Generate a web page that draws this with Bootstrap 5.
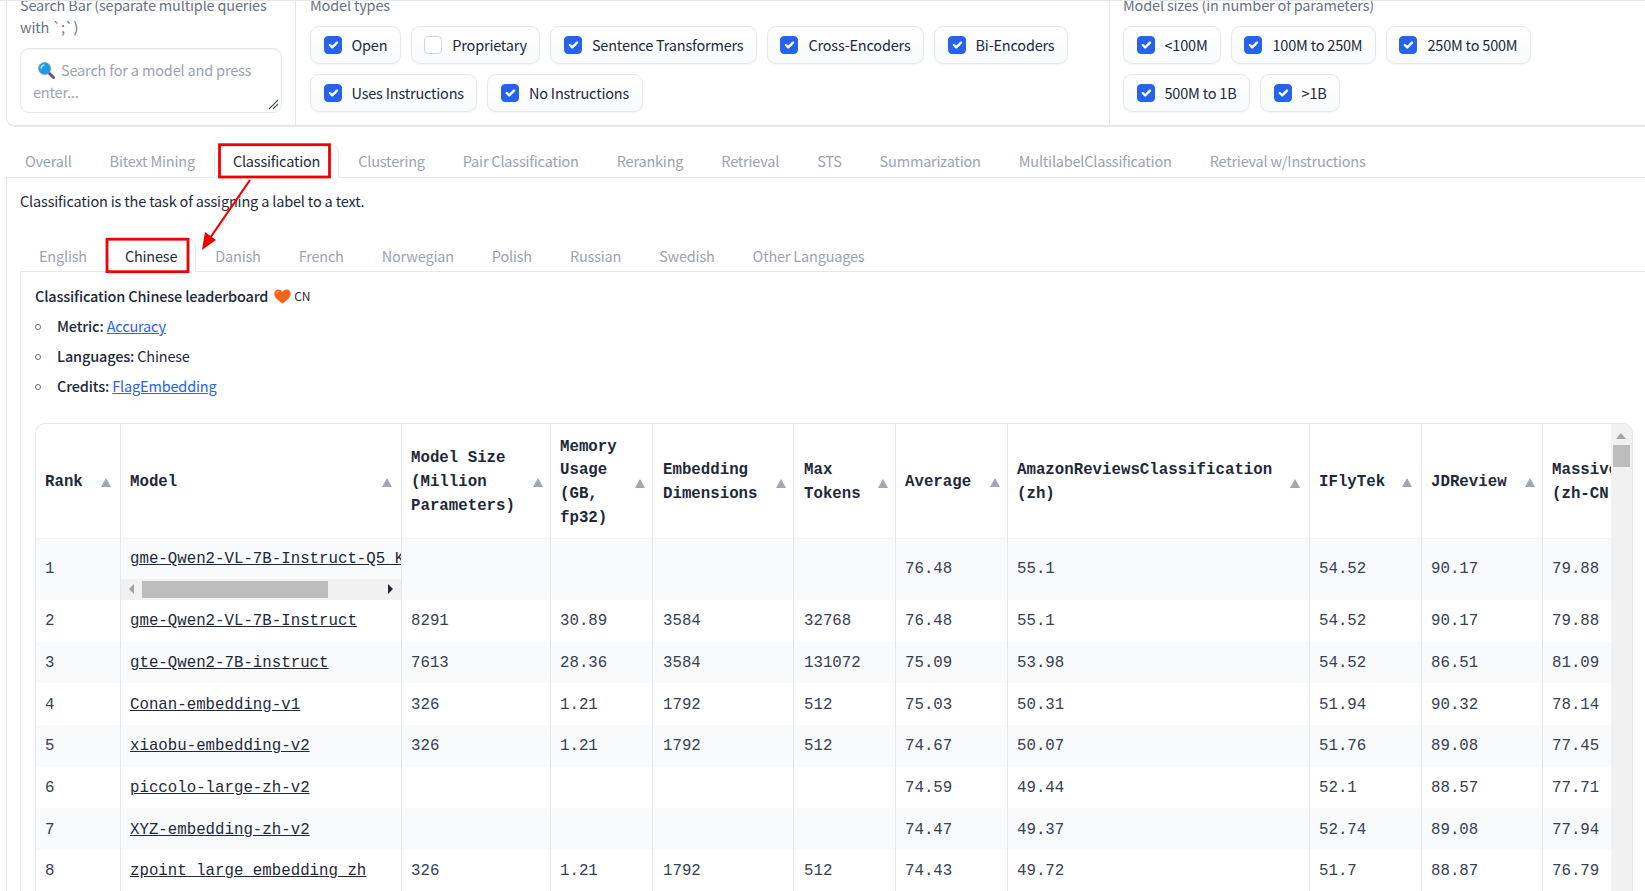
<!DOCTYPE html>
<html lang="en">
<head>
<meta charset="utf-8">
<title>Classification leaderboard</title>
<link href="https://cdn.jsdelivr.net/npm/bootstrap@5.3.0/dist/css/bootstrap.min.css" rel="stylesheet">
<style>
html,body{height:891px;overflow:hidden;background:#fff}
body{font-family:"Noto Sans CJK SC","Liberation Sans",sans-serif;font-size:14.5px;letter-spacing:-.17px;line-height:22px;color:#1f2937}
.lb-page{position:relative;height:891px;overflow:hidden}
.lb-topline{position:absolute;left:0;right:0;top:0;height:1px;background:#e5e7eb}
.lb-filters{margin:-6px 0 0 6px;height:133px;border:1px solid #e5e7eb;border-width:0 0 2px 1px;border-bottom-left-radius:9px}
.lb-fcol{padding:0 13px;border-right:1px solid #e5e7eb}
.lb-fcol:last-child{border-right:0;flex:1}
.lb-fcol-search{width:289px;flex:none}
.lb-fcol-types{width:814px;flex:none;padding-left:14px}
.lb-label{color:#6b7280;margin-bottom:10px}
.lb-search{position:relative;height:65px;border:1px solid #e5e7eb;border-radius:9px;padding:10px 12px;color:#9ca3af;box-shadow:inset 0 1px 2px rgba(0,0,0,.04)}
.lb-search svg.lb-lens{width:17px;height:17px;margin:0 6px 0 5px;vertical-align:-3px}
.lb-resize{position:absolute;right:2px;bottom:2px;width:11px;height:11px}
.lb-pills{gap:10px}
.lb-pill{display:flex;align-items:center;height:38px;padding:0 12.5px;border:1px solid #e5e7eb;border-radius:9px;background:linear-gradient(#fff,#f9fafb);box-shadow:0 1px 2px rgba(0,0,0,.04);color:#1f2937;margin:0;letter-spacing:-.2px}
.lb-pill .form-check-input{width:18px;height:18px;margin:0 10px 0 0;border-radius:4px;border-color:#d1d5db;flex:none}
.lb-pill .form-check-input:checked{background-color:#2563eb;border-color:#2563eb}
.lb-tabs{--bs-nav-tabs-border-color:#e5e7eb;--bs-nav-tabs-border-radius:9px;--bs-nav-tabs-link-active-border-color:#e5e7eb #e5e7eb #fff;--bs-nav-tabs-link-active-color:#1f2937;--bs-nav-tabs-link-hover-border-color:transparent;flex-wrap:nowrap}
.lb-tabs .nav-link{color:#9ca3af;padding:0 18px;height:34px;line-height:32px;font-size:14.5px;letter-spacing:-.195px;white-space:nowrap}
.lb-tabs .nav-link.active{color:#1f2937}
.lb-maintabs{margin:17px 0 0 6px}
.lb-outer{margin-left:6px;border-left:1px solid #e5e7eb;padding:12px 0 0 13px}
.lb-outer .lb-tabs .nav-link{line-height:34px}
.lb-intro{margin:0 0 26px}
.lb-inner{border-left:1px solid #e5e7eb;padding:13px 12px 0 14px}
.lb-heading{font-weight:500;margin-bottom:8px;display:flex;align-items:center}
.lb-heart{width:17px;height:15px;margin:0 3px 0 6px}
.lb-cn{font-size:12px;font-weight:400}
.lb-meta{list-style:none;margin:0 0 26px;padding:0}
.lb-meta li{margin-bottom:8px}
.lb-meta li::before{content:"";display:inline-block;width:6px;height:6px;border:1.2px solid #6b7280;border-radius:50%;margin:0 16px 0 0;vertical-align:2px}
.lb-meta strong{font-weight:500}
.lb-meta a{color:#2563eb}
.lb-tablebox{border:1px solid #e5e7eb;border-bottom:0;border-radius:10px 10px 0 0;overflow:hidden;height:480px}
.lb-tableclip{flex:1;min-width:0;overflow:hidden}
.lb-vscroll{position:relative;width:21px;flex:none;background:#f1f1f1}
.lb-vscroll-up{position:absolute;left:5px;top:9px;border:5px solid transparent;border-top:0;border-bottom:6px solid #a3a3a3}
.lb-vscroll-thumb{position:absolute;left:2px;right:2px;top:21px;height:22px;background:#bdbdbd}
.lb-table{table-layout:fixed;width:1620px;margin:0;font-family:"Liberation Mono",monospace;font-size:15.75px;letter-spacing:0;line-height:23px;--bs-table-color:#374151;--bs-table-striped-color:#374151;--bs-table-striped-bg:#f9fafb;--bs-table-border-color:#e5e7eb;--bs-table-accent-bg:transparent;border-collapse:separate;border-spacing:0}
.lb-table th,.lb-table td{border-bottom:0;border-right:1px solid #e5e7eb;padding:0 9px;vertical-align:middle;white-space:nowrap}
.lb-table th:nth-child(5),.lb-table th:nth-child(6),.lb-table td:nth-child(5),.lb-table td:nth-child(6){padding-left:10px}
.lb-table th{height:115px;padding-top:4px;line-height:23.7px;font-weight:700;color:#1f2937;border-bottom:1px solid #f1f3f5}
.lb-table td{height:41.7px;padding-top:2px}
.lb-table tbody tr:first-child td{height:61px;padding-top:0}
.lb-table a{color:#1f2937}
.lb-tri{width:0;height:0;border:5px solid transparent;border-top:0;border-bottom:9px solid #a0a6b2;flex:none}
.lb-tri-near{margin-right:-2px}
.lb-table .lb-modelcell{padding:0}
.lb-modeltext{height:40px;line-height:40px;padding:0 9px;overflow:hidden;white-space:nowrap}
.lb-hscroll{height:21px;background:#f1f1f1;position:relative}
.lb-hthumb{position:absolute;left:21px;width:186px;top:2px;bottom:2px;background:#bdbdbd}
.lb-hleft{position:absolute;left:8px;top:5px;border:5px solid transparent;border-left:0;border-right:5px solid #a3a3a3}
.lb-hright{position:absolute;right:8px;top:5px;border:5px solid transparent;border-right:0;border-left:5px solid #1f2937}
.lb-annot{position:absolute;left:0;top:0;width:1645px;height:891px;pointer-events:none}
</style>
</head>
<body>
<div class="lb-page">
  <div class="lb-topline"></div>

  <div class="lb-filters d-flex">
    <div class="lb-fcol lb-fcol-search">
      <div class="lb-label">Search Bar (separate multiple queries with `;`)</div>
      <div class="lb-search">
        <svg class="lb-lens" viewBox="0 0 17 17"><path d="M10.5 10.5 L15.5 15.5" stroke="#5b5a8c" stroke-width="3" stroke-linecap="round"/><circle cx="6.6" cy="6.6" r="6" fill="#1a9be6"/><circle cx="6.6" cy="6.6" r="6" fill="none" stroke="#8c8fb0" stroke-width=".8"/><path d="M3 6a4 4 0 0 1 3-3" stroke="#bfe6fb" stroke-width="1.4" fill="none" stroke-linecap="round"/></svg>Search for a model and press enter...
        <svg class="lb-resize" viewBox="0 0 11 11"><path d="M1 10 L10 1 M5 10 L10 5" stroke="#4b5563" stroke-width="1.1"/></svg>
      </div>
    </div>
    <div class="lb-fcol lb-fcol-types">
      <div class="lb-label">Model types</div>
      <div class="d-flex flex-wrap lb-pills">
        <label class="lb-pill"><input class="form-check-input" type="checkbox" checked>Open</label>
        <label class="lb-pill"><input class="form-check-input" type="checkbox">Proprietary</label>
        <label class="lb-pill"><input class="form-check-input" type="checkbox" checked>Sentence Transformers</label>
        <label class="lb-pill"><input class="form-check-input" type="checkbox" checked>Cross-Encoders</label>
        <label class="lb-pill"><input class="form-check-input" type="checkbox" checked>Bi-Encoders</label>
        <label class="lb-pill"><input class="form-check-input" type="checkbox" checked>Uses Instructions</label>
        <label class="lb-pill"><input class="form-check-input" type="checkbox" checked>No Instructions</label>
      </div>
    </div>
    <div class="lb-fcol">
      <div class="lb-label">Model sizes (in number of parameters)</div>
      <div class="d-flex flex-wrap lb-pills" style="width:440px">
        <label class="lb-pill"><input class="form-check-input" type="checkbox" checked>&lt;100M</label>
        <label class="lb-pill"><input class="form-check-input" type="checkbox" checked>100M to 250M</label>
        <label class="lb-pill"><input class="form-check-input" type="checkbox" checked>250M to 500M</label>
        <label class="lb-pill"><input class="form-check-input" type="checkbox" checked>500M to 1B</label>
        <label class="lb-pill"><input class="form-check-input" type="checkbox" checked>&gt;1B</label>
      </div>
    </div>
  </div>

  <ul class="nav nav-tabs lb-tabs lb-maintabs">
    <li class="nav-item"><a class="nav-link" href="#">Overall</a></li>
    <li class="nav-item"><a class="nav-link" href="#">Bitext Mining</a></li>
    <li class="nav-item"><a class="nav-link active" href="#">Classification</a></li>
    <li class="nav-item"><a class="nav-link" href="#">Clustering</a></li>
    <li class="nav-item"><a class="nav-link" href="#">Pair Classification</a></li>
    <li class="nav-item"><a class="nav-link" href="#">Reranking</a></li>
    <li class="nav-item"><a class="nav-link" href="#">Retrieval</a></li>
    <li class="nav-item"><a class="nav-link" href="#">STS</a></li>
    <li class="nav-item"><a class="nav-link" href="#">Summarization</a></li>
    <li class="nav-item"><a class="nav-link" href="#">MultilabelClassification</a></li>
    <li class="nav-item"><a class="nav-link" href="#">Retrieval w/Instructions</a></li>
  </ul>

  <div class="lb-outer">
    <p class="lb-intro">Classification is the task of assigning a label to a text.</p>
    <ul class="nav nav-tabs lb-tabs">
      <li class="nav-item"><a class="nav-link" href="#">English</a></li>
      <li class="nav-item"><a class="nav-link active" href="#">Chinese</a></li>
      <li class="nav-item"><a class="nav-link" href="#">Danish</a></li>
      <li class="nav-item"><a class="nav-link" href="#">French</a></li>
      <li class="nav-item"><a class="nav-link" href="#">Norwegian</a></li>
      <li class="nav-item"><a class="nav-link" href="#">Polish</a></li>
      <li class="nav-item"><a class="nav-link" href="#">Russian</a></li>
      <li class="nav-item"><a class="nav-link" href="#">Swedish</a></li>
      <li class="nav-item"><a class="nav-link" href="#">Other Languages</a></li>
    </ul>
    <div class="lb-inner">
      <div class="lb-heading">Classification Chinese leaderboard<svg class="lb-heart" viewBox="0 0 17 15"><path d="M8.5 14.6C3 10.6.3 7.9.3 4.7.3 2.2 2.2.4 4.5.4c1.7 0 3.1.9 4 2.4C9.400 1.300 10.800.4 12.500.4c2.300 0 4.200 1.800 4.200 4.300 0 3.200-2.700 5.900-8.200 9.900z" fill="#f4631e"/><path d="M3 4.500C3 3.300 3.900 2.400 5 2.400" stroke="#ff9d66" stroke-width="1.200" fill="none" stroke-linecap="round"/></svg><span class="lb-cn">CN</span></div>
      <ul class="lb-meta">
        <li><strong>Metric:</strong> <a href="#">Accuracy</a></li>
        <li><strong>Languages:</strong> Chinese</li>
        <li><strong>Credits:</strong> <a href="#">FlagEmbedding</a></li>
      </ul>
      <div class="lb-tablebox d-flex">
        <div class="lb-tableclip">
          <table class="table table-striped lb-table">
            <colgroup>
              <col style="width:85px"><col style="width:281px"><col style="width:149px"><col style="width:102px"><col style="width:141px"><col style="width:102px"><col style="width:112px"><col style="width:302px"><col style="width:112px"><col style="width:121px"><col style="width:113px">
            </colgroup>
            <thead>
              <tr>
                <th><div class="d-flex align-items-center justify-content-between">Rank<span class="lb-tri"></span></div></th>
                <th><div class="d-flex align-items-center justify-content-between">Model<span class="lb-tri"></span></div></th>
                <th><div class="d-flex align-items-center justify-content-between"><span>Model Size<br>(Million<br>Parameters)</span><span class="lb-tri lb-tri-near"></span></div></th>
                <th><div class="d-flex align-items-center justify-content-between"><span>Memory<br>Usage<br>(GB,<br>fp32)</span><span class="lb-tri lb-tri-near"></span></div></th>
                <th><div class="d-flex align-items-center justify-content-between"><span>Embedding<br>Dimensions</span><span class="lb-tri lb-tri-near"></span></div></th>
                <th><div class="d-flex align-items-center justify-content-between"><span>Max<br>Tokens</span><span class="lb-tri lb-tri-near"></span></div></th>
                <th><div class="d-flex align-items-center justify-content-between">Average<span class="lb-tri lb-tri-near"></span></div></th>
                <th><div class="d-flex align-items-center justify-content-between"><span>AmazonReviewsClassification<br>(zh)</span><span class="lb-tri"></span></div></th>
                <th><div class="d-flex align-items-center justify-content-between">IFlyTek<span class="lb-tri"></span></div></th>
                <th><div class="d-flex align-items-center justify-content-between">JDReview<span class="lb-tri lb-tri-near"></span></div></th>
                <th><div class="d-flex align-items-center justify-content-between"><span>MassiveScenario<br>(zh-CN)</span><span class="lb-tri"></span></div></th>
              </tr>
            </thead>
            <tbody>
              <tr><td>1</td><td class="lb-modelcell"><div class="lb-modeltext"><a href="#">gme-Qwen2-VL-7B-Instruct-Q5_K_M</a></div><div class="lb-hscroll"><span class="lb-hleft"></span><span class="lb-hthumb"></span><span class="lb-hright"></span></div></td><td></td><td></td><td></td><td></td><td>76.48</td><td>55.1</td><td>54.52</td><td>90.17</td><td>79.88</td></tr>
              <tr><td>2</td><td><a href="#">gme-Qwen2-VL-7B-Instruct</a></td><td>8291</td><td>30.89</td><td>3584</td><td>32768</td><td>76.48</td><td>55.1</td><td>54.52</td><td>90.17</td><td>79.88</td></tr>
              <tr><td>3</td><td><a href="#">gte-Qwen2-7B-instruct</a></td><td>7613</td><td>28.36</td><td>3584</td><td>131072</td><td>75.09</td><td>53.98</td><td>54.52</td><td>86.51</td><td>81.09</td></tr>
              <tr><td>4</td><td><a href="#">Conan-embedding-v1</a></td><td>326</td><td>1.21</td><td>1792</td><td>512</td><td>75.03</td><td>50.31</td><td>51.94</td><td>90.32</td><td>78.14</td></tr>
              <tr><td>5</td><td><a href="#">xiaobu-embedding-v2</a></td><td>326</td><td>1.21</td><td>1792</td><td>512</td><td>74.67</td><td>50.07</td><td>51.76</td><td>89.08</td><td>77.45</td></tr>
              <tr><td>6</td><td><a href="#">piccolo-large-zh-v2</a></td><td></td><td></td><td></td><td></td><td>74.59</td><td>49.44</td><td>52.1</td><td>88.57</td><td>77.71</td></tr>
              <tr><td>7</td><td><a href="#">XYZ-embedding-zh-v2</a></td><td></td><td></td><td></td><td></td><td>74.47</td><td>49.37</td><td>52.74</td><td>89.08</td><td>77.94</td></tr>
              <tr><td>8</td><td><a href="#">zpoint_large_embedding_zh</a></td><td>326</td><td>1.21</td><td>1792</td><td>512</td><td>74.43</td><td>49.72</td><td>51.7</td><td>88.87</td><td>76.79</td></tr>
            </tbody>
          </table>
        </div>
        <div class="lb-vscroll"><span class="lb-vscroll-up"></span><span class="lb-vscroll-thumb"></span></div>
      </div>
    </div>
  </div>

  <svg class="lb-annot" viewBox="0 0 1645 891">
    <rect x="219.500" y="144.700" width="110" height="32.300" fill="none" stroke="#f00000" stroke-width="2.800"/>
    <rect x="107" y="239.200" width="81" height="32.500" fill="none" stroke="#f00000" stroke-width="2.800"/>
    <path d="M250 180 L208 241" stroke="#f00000" stroke-width="2.200" fill="none"/>
    <path d="M202 250 L205 232 L216 240 Z" fill="#f00000"/>
  </svg>
</div>
<script src="https://cdn.jsdelivr.net/npm/bootstrap@5.3.0/dist/js/bootstrap.bundle.min.js"></script>
</body>
</html>
